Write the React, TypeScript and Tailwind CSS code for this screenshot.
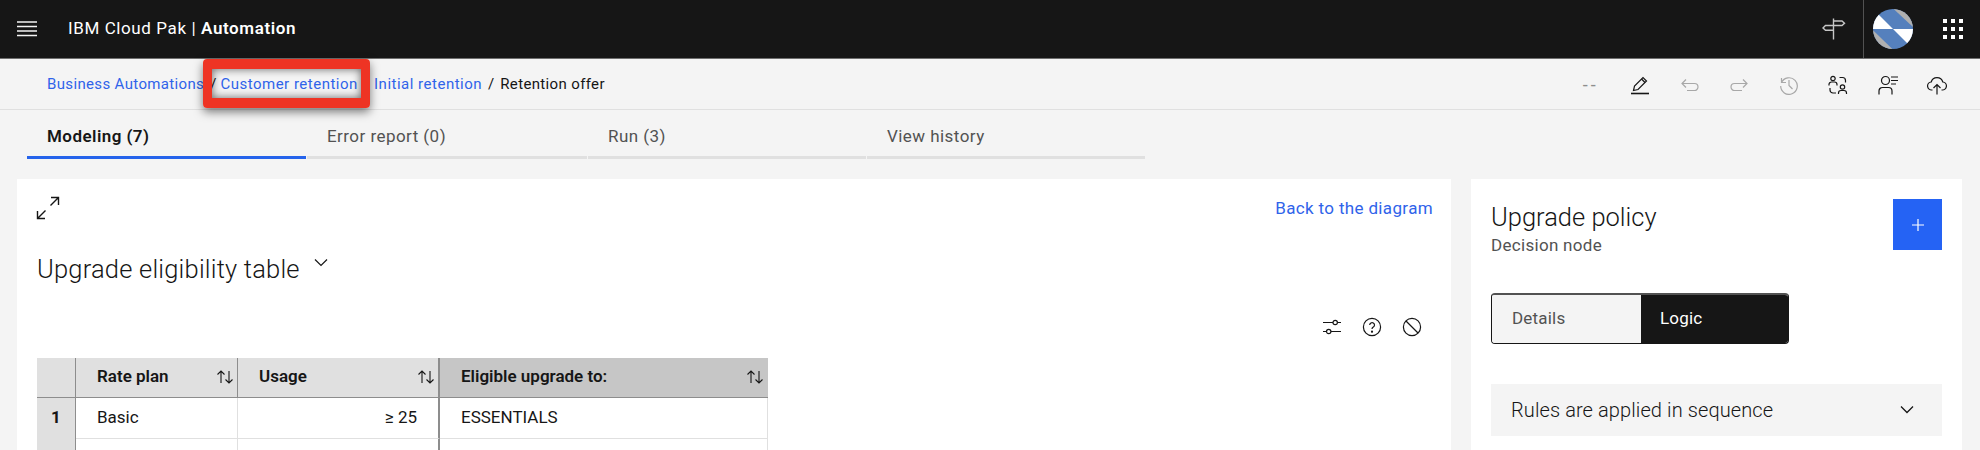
const crumbLink = "text-[15px] tracking-[0.5px] text-[#2f63ea]";

function IconBtn({ children }: { children: React.ReactNode }) {
  return <div className="flex h-5 w-[49.5px] items-center justify-center">{children}</div>;
}

function Stroke({ children, color = "#161616", size = 20 }: { children: React.ReactNode; color?: string; size?: number }) {
  return (
    <svg width={size} height={size} viewBox="0 0 20 20" fill="none" stroke={color} strokeWidth="1.2">
      {children}
    </svg>
  );
}

function SortIcon() {
  return (
    <svg width="18" height="18" viewBox="0 0 18 18" fill="none" stroke="#161616" strokeWidth="1.1">
      <path d="M5 15V3M1.5 6.5 5 3l3.5 3.5M13 3v12M9.5 11.5 13 15l3.5-3.5" />
    </svg>
  );
}

function Avatar() {
  return (
    <svg width="40" height="40" viewBox="0 0 120 120">
      <defs>
        <clipPath id="avatar-clip">
          <circle cx="60" cy="60" r="60" />
        </clipPath>
      </defs>
      <g clipPath="url(#avatar-clip)">
        <rect width="120" height="120" fill="#5580bd" />
        <path d="M0 60h60L0 0z" fill="#fff" />
        <path d="M60 60h60v60z" fill="#fff" />
        <path d="M62 0h58v54z" fill="#b0b0b0" />
        <path d="M0 64l58 56H0z" fill="#b0b0b0" />
      </g>
    </svg>
  );
}

const tabLabel = "flex items-center border-b-[3px] pl-[20px] pt-[7px] text-[17px] tracking-[0.45px]";

export default function App() {
  return (
    <div className="relative h-[450px] w-[1980px] overflow-hidden bg-[#f4f4f4] font-['Roboto',sans-serif] text-[#161616]">
      <header className="flex h-[59px] items-center border-b border-[#6f6f6f] bg-[#161616] text-white">
        <svg className="ml-[17px]" width="20" height="18" viewBox="0 0 20 18" stroke="#f4f4f4" strokeWidth="1.4">
          <path d="M0 2h20M0 6.5h20M0 11h20M0 15.5h20" />
        </svg>
        <div className="ml-[31px] text-[17px] tracking-[0.6px]">
          IBM Cloud Pak | <span className="font-semibold">Automation</span>
        </div>
        <div className="ml-auto mr-[17px]">
          <svg width="24" height="24" viewBox="0 0 24 24" fill="none" stroke="#c6c6c6" strokeWidth="1.4">
            <path d="M11.5 1.5v21M11.5 4H20l2.5 2.2L20 8.5h-8.5M11.5 8.5H3.5L1 11l2.5 2.3h8" />
          </svg>
        </div>
        <div className="flex h-full w-[117px] items-center border-l border-[#525252] pl-[9px]">
          <Avatar />
          <svg className="ml-[30px]" width="20" height="20" viewBox="0 0 20 20" fill="#fff">
            <path d="M0 0h4v4H0zM8 0h4v4H8zM16 0h4v4h-4zM0 8h4v4H0zM8 8h4v4H8zM16 8h4v4h-4zM0 16h4v4H0zM8 16h4v4H8zM16 16h4v4h-4z" />
          </svg>
        </div>
      </header>

      <div className="flex h-[51px] items-center border-b border-[#e0e0e0] pl-[47px] pr-[18px] pt-[1px]">
        <a className="text-[15px] tracking-[0.35px] text-[#2f63ea]">Business Automations</a>
        <span className="ml-[6px] text-[15px]">/</span>
        <a className={`ml-[4px] ${crumbLink}`}>Customer retention</a>
        <span className="ml-[6px] text-[15px]">/</span>
        <a className={`ml-[4px] ${crumbLink}`}>Initial retention</a>
        <span className="ml-[6px] text-[15px]">/</span>
        <span className="ml-[6px] text-[15px] tracking-[0.35px]">Retention offer</span>
        <div className="ml-auto flex items-center">
          <IconBtn>
            <span className="text-[18px] tracking-[3px] text-[#8d8d8d]">--</span>
          </IconBtn>
          <IconBtn>
            <Stroke>
              <path d="M1 18.5h18" strokeWidth="1.6" />
              <path d="M3.5 15.5 4.5 11 13 2.5l3.5 3.5L8 14.5z" />
              <path d="m11.5 4 3.5 3.5" />
            </Stroke>
          </IconBtn>
          <IconBtn>
            <Stroke color="#a8a8a8">
              <path d="M6 4.5 2 8.5l4 4M2 8.5h12.5a3.5 3.5 0 0 1 0 7H7" />
            </Stroke>
          </IconBtn>
          <IconBtn>
            <Stroke color="#a8a8a8">
              <path d="m14 4.5 4 4-4 4M18 8.5H5.5a3.5 3.5 0 0 0 0 7H13" />
            </Stroke>
          </IconBtn>
          <IconBtn>
            <Stroke color="#a8a8a8">
              <path d="M2.5 3v4.5H7" />
              <path d="M2.5 7.5A8.3 8.3 0 1 1 1.7 11" />
              <path d="M10 5v5.5l3.5 3.5" />
            </Stroke>
          </IconBtn>
          <IconBtn>
            <Stroke>
              <circle cx="5" cy="3.5" r="2.2" />
              <path d="M1 10.5V9.5a2.5 2.5 0 0 1 2.5-2.5h3A2.5 2.5 0 0 1 9 9.5v1" />
              <circle cx="14.5" cy="12" r="2.2" />
              <path d="M10.5 19v-1a2.5 2.5 0 0 1 2.5-2.5h3a2.5 2.5 0 0 1 2.5 2.5v1" />
              <path d="M11.5 2.5h3a3 3 0 0 1 3 3v2M8 18H5a3 3 0 0 1-3-3v-2" />
            </Stroke>
          </IconBtn>
          <IconBtn>
            <Stroke>
              <circle cx="7.5" cy="5.5" r="4" />
              <path d="M1 19.5V16a3.5 3.5 0 0 1 3.5-3.5h6A3.5 3.5 0 0 1 14 16v3.5" />
              <path d="M13 2h7M13 5.5h7M13 9h5" />
            </Stroke>
          </IconBtn>
          <IconBtn>
            <Stroke>
              <path d="M5.5 15H5A4 4 0 0 1 4.2 7a6 6 0 0 1 11.6 0 4 4 0 0 1-.8 8h-.5" />
              <path d="M10 19.5V9.5M6.5 13 10 9.5l3.5 3.5" />
            </Stroke>
          </IconBtn>
        </div>
      </div>

      <div className="ml-[27px] flex h-[49px] w-[1118px] gap-px">
        <div className={`${tabLabel} w-[279px] border-[#2563eb] font-semibold`}>Modeling (7)</div>
        <div className={`${tabLabel} w-[280px] border-[#e0e0e0] text-[#525252]`}>Error report (0)</div>
        <div className={`${tabLabel} w-[278px] border-[#e0e0e0] text-[#525252]`}>Run (3)</div>
        <div className={`${tabLabel} w-[278px] border-[#e0e0e0] text-[#525252]`}>View history</div>
      </div>

      <main className="flex gap-[20px] pl-[17px] pt-[20px]">
        <section className="h-[271px] w-[1434px] bg-white pl-[19px] pr-[18px] pt-[17px]">
          <div className="flex items-start justify-between">
            <svg width="24" height="24" viewBox="0 0 24 24" fill="none" stroke="#161616" strokeWidth="1.4">
              <path d="M14.5 9.5 22.5 1.5M15 1.5h7.5V9M9.5 14.5l-8 8M1.5 15v7.5H9" />
            </svg>
            <a className="text-[17px] tracking-[0.35px] text-[#2f63ea]">Back to the diagram</a>
          </div>
          <div className="mt-[32px] flex items-start pl-[1px]">
            <h2 className="text-[25.5px] font-light leading-[30px] tracking-[0.2px]">Upgrade eligibility table</h2>
            <svg className="ml-[14px] mt-[4px]" width="14" height="10" viewBox="0 0 14 10" fill="none" stroke="#161616" strokeWidth="1.2">
              <path d="m1 1.5 6 6 6-6" />
            </svg>
          </div>
          <div className="mt-[33px] flex h-5 justify-end gap-[20px] pr-[11px]">
            <Stroke>
              <path d="M1 5.5h10M15.5 5.5H19M1 14.5h3.5M9 14.5h10" />
              <circle cx="13.2" cy="5.5" r="2.2" />
              <circle cx="6.7" cy="14.5" r="2.2" />
            </Stroke>
            <Stroke>
              <circle cx="10" cy="10" r="8.6" />
              <path d="M7.7 8a2.4 2.4 0 1 1 3.6 2.1c-.9.5-1.3 1-1.3 2" />
              <circle cx="10" cy="14.7" r="0.5" fill="#161616" />
            </Stroke>
            <Stroke>
              <circle cx="10" cy="10" r="8.6" />
              <path d="m4 4 12 12" />
            </Stroke>
          </div>
          <div className="ml-[1px] mt-[21px] grid w-[731px] grid-cols-[39px_162px_202px_328px] text-[17px]">
            <div className="h-[40px] border-b border-r border-[#8d8d8d] bg-[#e0e0e0]" />
            <div className="flex h-[40px] items-center justify-between border-b border-r border-[#8d8d8d] bg-[#e0e0e0] pl-[21px] pr-[3px] font-semibold">
              Rate plan
              <SortIcon />
            </div>
            <div className="flex h-[40px] items-center justify-between border-b border-r-2 border-[#8d8d8d] bg-[#e0e0e0] pl-[21px] pr-[3px] font-semibold">
              Usage
              <SortIcon />
            </div>
            <div className="flex h-[40px] items-center justify-between border-b border-[#8d8d8d] bg-[#c6c6c6] pl-[21px] pr-[4px] font-semibold">
              Eligible upgrade to:
              <SortIcon />
            </div>

            <div className="flex h-[41px] items-center justify-center border-r border-[#8d8d8d] bg-[#e0e0e0] pb-px font-bold">1</div>
            <div className="flex h-[41px] items-center border-b border-r border-[#e0e0e0] pl-[21px]">Basic</div>
            <div className="flex h-[41px] items-center justify-end border-b border-r-2 border-b-[#e0e0e0] border-r-[#8d8d8d] pr-[21px]">≥ 25</div>
            <div className="flex h-[41px] items-center border-b border-r border-[#e0e0e0] pl-[21px]">ESSENTIALS</div>

            <div className="h-[41px] border-r border-[#8d8d8d] bg-[#e0e0e0]" />
            <div className="h-[41px] border-r border-[#e0e0e0]" />
            <div className="h-[41px] border-r-2 border-[#8d8d8d]" />
            <div className="h-[41px] border-r border-[#e0e0e0]" />
          </div>
        </section>

        <aside className="h-[271px] w-[491px] bg-white px-[20px] pt-[19px]">
          <div className="flex items-start justify-between">
            <div>
              <h3 className="text-[25.5px] font-light leading-[38px]">Upgrade policy</h3>
              <p className="text-[17px] leading-[18px] tracking-[0.3px] text-[#525252]">Decision node</p>
            </div>
            <button className="mt-[1px] flex h-[51px] w-[49px] items-center justify-center bg-[#2563f4]">
              <svg width="12" height="12" viewBox="0 0 12 12" stroke="#fff" strokeWidth="1.2">
                <path d="M6 0v12M0 6h12" />
              </svg>
            </button>
          </div>
          <div className="mt-[39px] flex h-[51px] w-[298px] overflow-hidden rounded-[4px] border border-t-2 border-[#161616] border-t-[#525252] text-[17px] tracking-[0.2px]">
            <div className="flex w-[149px] items-center bg-[#f4f4f4] pl-[20px] text-[#525252]">Details</div>
            <div className="flex flex-1 items-center bg-[#161616] pl-[19px] text-white">Logic</div>
          </div>
          <div className="mt-[40px] flex h-[52px] items-center justify-between bg-[#f4f4f4] pl-[20px] pr-[28px]">
            <span className="text-[20px] font-light tracking-[0.1px]">Rules are applied in sequence</span>
            <svg width="14" height="10" viewBox="0 0 14 10" fill="none" stroke="#161616" strokeWidth="1.3">
              <path d="m1 1.5 6 6 6-6" />
            </svg>
          </div>
        </aside>
      </main>

      {/* red callout drawn over the breadcrumb */}
      <div className="pointer-events-none absolute left-[203px] top-[59px] h-[49px] w-[167px] rounded-[4px] border-y-[10px] border-x-[9px] border-[#ee3424] shadow-[0_4px_10px_rgba(0,0,0,0.5),inset_0_0_8px_rgba(0,0,0,0.6)]" />
    </div>
  );
}
